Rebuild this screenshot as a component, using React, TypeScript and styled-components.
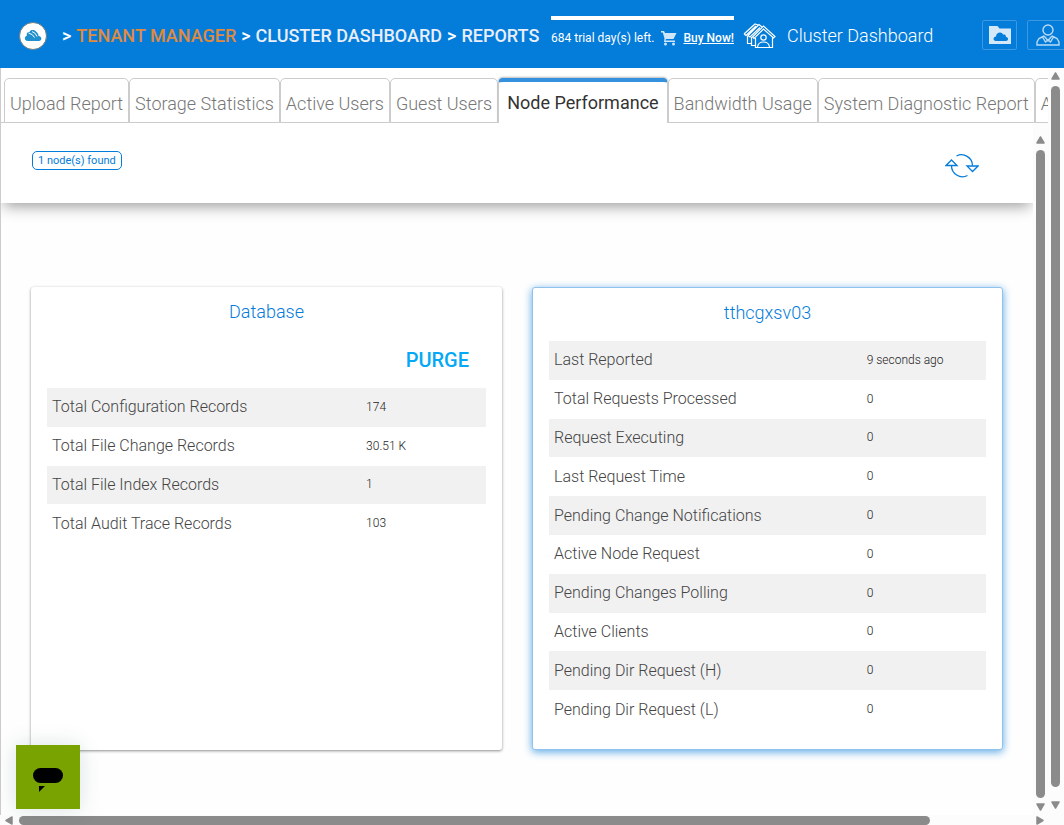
import React from "react";
import styled, { createGlobalStyle, css } from "styled-components";

const Global = createGlobalStyle`
  *, *::before, *::after { box-sizing: border-box; }
  html, body { margin: 0; padding: 0; }
  body { font-family: Roboto, "Liberation Sans", sans-serif; font-weight: 300; color: #222; background: #fff; overflow: hidden; }
  button { font: inherit; cursor: pointer; }
`;

const Page = styled.div`
  display: flex;
  flex-direction: column;
  height: 100vh;
  background: #fdfdfd;
`;

const Header = styled.header`
  display: flex;
  align-items: center;
  flex: none;
  height: 68px;
  padding: 4px 0 0 19px;
  background: #047cda;
  color: #fff;
  overflow: hidden;
  white-space: nowrap;
`;

const Logo = styled.a`
  display: flex;
  flex: none;
  width: 28px;
  height: 28px;
  margin-right: 15px;
`;

const Crumbs = styled.nav`
  display: flex;
  flex: none;
  gap: 5px;
  width: 489px;
  font-size: 18px;
  line-height: 24px;
  font-weight: 500;
`;

const Crumb = styled.a<{ $accent?: boolean }>`
  color: ${(p) => (p.$accent ? "#e08a3e" : "#e9eef8")};
  text-decoration: none;
`;

const Trial = styled.div`
  display: flex;
  align-items: center;
  justify-content: space-between;
  flex: none;
  width: 183px;
  height: 40px;
  border-top: 4px solid #fff;
  font-size: 12px;
  font-weight: 400;
`;

const BuyLink = styled.a`
  color: #fff;
  font-weight: 500;
`;

const Title = styled.h1`
  display: flex;
  align-items: center;
  flex: 1 0 auto;
  gap: 11px;
  margin: 0 0 0 9px;
  font-size: 18px;
  line-height: 26px;
  font-weight: 300;
`;

const HeaderButton = styled.button<{ $wide?: boolean }>`
  display: flex;
  align-items: center;
  justify-content: center;
  flex: none;
  width: ${(p) => (p.$wide ? 42 : 35)}px;
  height: 30px;
  margin: 0 ${(p) => (p.$wide ? -5 : 10)}px 2px 0;
  padding: 0;
  border: 1px solid #3d98e2;
  border-radius: 2px;
  background: none;
`;

const Row = styled.div`
  display: flex;
  flex: 1;
  min-width: 0;
  min-height: 0;
`;

const Frame = styled.div`
  display: flex;
  flex-direction: column;
  flex: 1;
  min-width: 0;
  min-height: 0;
  border-left: 1px solid #ccc;
  background: #fff;
`;

const Tabs = styled.div`
  display: flex;
  align-items: flex-end;
  flex: none;
  height: 55px;
  padding-left: 3px;
  overflow: hidden;
  box-shadow: inset 0 -1px #ccc;
`;

const Tab = styled.button<{ $active?: boolean }>`
  flex: none;
  height: 45px;
  padding: 6px 5px 0;
  border: 1px solid #ccc;
  border-radius: 5px 5px 0 0;
  background: #fff;
  color: #777;
  font-size: 18px;
  line-height: 24px;
  font-weight: 300;
  white-space: nowrap;
  ${(p) =>
    p.$active &&
    css`
      padding: 0 8px;
      border-top: 4px solid #3391de;
      border-bottom: 0;
      color: #333;
      font-weight: 400;
      box-shadow: 0 -1px 2px #bbb;
    `}
`;

const Content = styled.main`
  flex: 1;
  min-width: 0;
  overflow: hidden;
  background: #fefefe;
`;

const Toolbar = styled.div`
  display: flex;
  justify-content: space-between;
  align-items: flex-start;
  height: 80px;
  padding: 28px 54px 0 31px;
  background: #fff;
  box-shadow: 0 6px 14px -3px rgba(0, 0, 0, 0.4);
`;

const Badge = styled.span`
  height: 19px;
  padding: 0 5px;
  border: 1px solid #047cda;
  border-radius: 5px;
  color: #047cda;
  font-size: 11px;
  line-height: 17px;
  font-weight: 400;
`;

const IconButton = styled.button`
  display: flex;
  padding: 0;
  border: 0;
  background: none;
`;

const Cards = styled.div`
  display: grid;
  grid-template-columns: 1fr 1fr;
  gap: 30px;
  padding: 84px 30px 0;
`;

const Card = styled.section<{ $active?: boolean }>`
  min-height: 463px;
  padding: 12px 16px;
  border-radius: 3px;
  background: #fff;
  box-shadow: 0 1px 3px rgba(0, 0, 0, 0.45);
  ${(p) =>
    p.$active &&
    css`
      border: 1px solid #8fc3ee;
      box-shadow: 0 2px 8px #5aa7e4;
    `}
`;

const CardTitle = styled.h2`
  margin: 0;
  color: #047cda;
  font-size: 18px;
  line-height: 26px;
  font-weight: 300;
  text-align: center;
`;

const Actions = styled.div`
  display: flex;
  justify-content: flex-end;
  padding: 21px 17px 14px;
`;

const Purge = styled.button`
  padding: 0;
  border: 0;
  background: none;
  color: #03a9f4;
  font-size: 20px;
  line-height: 28px;
  font-weight: 500;
`;

const Table = styled.table<{ $height: number; $gap?: boolean }>`
  width: 100%;
  height: ${(p) => p.$height}px;
  margin-top: ${(p) => (p.$gap ? 15 : 0)}px;
  border-collapse: collapse;
  table-layout: fixed;
`;

const Tr = styled.tr`
  &:nth-child(odd) { background: #f1f1f1; }
`;

const Label = styled.th`
  width: 72%;
  padding: 0 5px;
  color: #444;
  font-size: 16px;
  line-height: 20px;
  font-weight: 300;
  text-align: left;
`;

const Value = styled.td`
  padding: 0 3px 1px;
  font-size: 12px;
  line-height: 20px;
`;

const VBar = styled.div<{ $inner?: boolean }>`
  display: flex;
  flex-direction: column;
  align-items: center;
  flex: none;
  width: ${(p) => (p.$inner ? 15 : 16)}px;
  padding: ${(p) => (p.$inner ? "13px 0 3px" : "4px 1px 5px 0")};
  gap: 5px;
  background: #fcfcfc;
`;

const HBar = styled.div`
  display: flex;
  align-items: center;
  flex: none;
  height: 10px;
  padding: 1px 19px 0 5px;
  gap: 5px;
  background: #fcfcfc;
`;

const Thumb = styled.div<{ $short?: boolean }>`
  flex: 1;
  width: 9px;
  margin-bottom: ${(p) => (p.$short ? 9 : 0)}px;
  border-radius: 5px;
  background: #8b8b8b;
`;

const HTrack = styled.div`
  flex: 1;
  height: 9px;
`;

const HThumb = styled.div`
  width: 90%;
  height: 9px;
  border-radius: 5px;
  background: #8b8b8b;
`;

const Chat = styled.button`
  position: fixed;
  left: 16px;
  bottom: 16px;
  width: 64px;
  height: 64px;
  padding: 0;
  border: 0;
  background: #78a300;
  box-shadow: 0 0 20px rgba(23, 73, 77, 0.15);
`;

const ArrowIcon = styled.svg`
  flex: none;
`;

const arrows = {
  up: "M4.500 1L8 7H1Z",
  down: "M4.500 7L8 1H1Z",
  left: "M1 4.500L7 1V8Z",
  right: "M7 4.500L1 1V8Z",
};

const Arrow = ({ dir }: { dir: keyof typeof arrows }) => (
  <ArrowIcon width="9" height="9" viewBox="0 0 9 9" aria-hidden="true">
    <path d={arrows[dir]} fill="#8b8b8b" stroke="#8b8b8b" strokeWidth="1.500" strokeLinejoin="round" />
  </ArrowIcon>
);

const ScrollBar = ({ inner }: { inner?: boolean }) => (
  <VBar $inner={inner}>
    <Arrow dir="up" />
    <Thumb $short={!inner} />
    <Arrow dir="down" />
  </VBar>
);

const tabs = ["Upload Report", "Storage Statistics", "Active Users", "Guest Users", "Node Performance", "Bandwidth Usage", "System Diagnostic Report", "A"];

const database = [
  ["Total Configuration Records", "174"],
  ["Total File Change Records", "30.51 K"],
  ["Total File Index Records", "1"],
  ["Total Audit Trace Records", "103"],
];

const node = [
  ["Last Reported", "9 seconds ago"],
  ["Total Requests Processed", "0"],
  ["Request Executing", "0"],
  ["Last Request Time", "0"],
  ["Pending Change Notifications", "0"],
  ["Active Node Request", "0"],
  ["Pending Changes Polling", "0"],
  ["Active Clients", "0"],
  ["Pending Dir Request (H)", "0"],
  ["Pending Dir Request (L)", "0"],
];

const Stats = ({ rows, height, gap }: { rows: string[][]; height: number; gap?: boolean }) => (
  <Table $height={height} $gap={gap}>
    <tbody>
      {rows.map(([name, value]) => (
        <Tr key={name}>
          <Label scope="row">{name}</Label>
          <Value>{value}</Value>
        </Tr>
      ))}
    </tbody>
  </Table>
);

export default function App() {
  return (
    <Page>
      <Global />
      <Header>
        <Logo href="#" aria-label="Home">
          <svg width="28" height="28" viewBox="0 0 28 28">
            <circle cx="14" cy="14" r="13.500" fill="#fff" stroke="#6b7d80" />
            <path d="M9 19C5 19 5 14.500 8 13.500C7 11 9 10 10.500 10C11.500 7.500 15 7.500 17 9.500C19 11 19.500 12.500 19.500 14C23.500 14.500 23 19 20 19Z" fill="#1f8fd0" />
            <path d="M9.500 11Q14 12 15.500 15.500M13 9.500Q17 11 18 14.500" fill="none" stroke="#fff" />
          </svg>
        </Logo>
        <Crumbs aria-label="Breadcrumb">
          <span>&gt;</span>
          <Crumb href="#" $accent>TENANT MANAGER</Crumb>
          <span>&gt;</span>
          <Crumb href="#">CLUSTER DASHBOARD</Crumb>
          <span>&gt;</span>
          <Crumb href="#">REPORTS</Crumb>
        </Crumbs>
        <Trial>
          <span>684 trial day(s) left.</span>
          <svg width="16" height="16" viewBox="0 0 16 16" fill="#cfe5f8" aria-hidden="true">
            <path d="M0 1H3L4 3H15.500L12.500 9H5L4.500 10.500H14V12H3L3.500 8.500L1.800 2.500H0Z" />
            <circle cx="4.500" cy="14" r="1.500" />
            <circle cx="12.500" cy="14" r="1.500" />
          </svg>
          <BuyLink href="#">Buy Now!</BuyLink>
        </Trial>
        <Title>
          <svg width="33" height="26" viewBox="0 0 33 26" fill="none" stroke="#fff" strokeWidth="1.200" aria-hidden="true">
            <path d="M9.500 14L20.500 3L32 13.500L30.500 15L20.500 6L11 15.500ZM12.500 15V24.500H29.500V14.500" />
            <path d="M5 12.500L16 1.500L19 4M5 12.500L7 14L17 4.500M8.500 14V22.500H12.500M1 11L12 1L15 2M1 11L3 12.500L13 3M4.500 12.500V20.500H8.500" />
            <circle cx="20.500" cy="14.500" r="2.700" />
            <path d="M14.500 24C15 20.500 17 19 20.500 19C24 19 26 20.500 26.500 24" />
          </svg>
          Cluster Dashboard
        </Title>
        <HeaderButton aria-label="Cloud folder">
          <svg width="22" height="18" viewBox="0 0 22 18" aria-hidden="true">
            <path d="M0 0H8.500L10.500 2.500H22V18H0Z" fill="#d4e8f9" />
            <path d="M7 15C3.500 15 4 10.500 7 10.500C7 6 13 5 14 8.500C17 8 17 10.500 17 11C20 11 19.500 15 17 15Z" fill="#047cda" />
          </svg>
        </HeaderButton>
        <HeaderButton aria-label="Account" $wide>
          <svg width="24" height="22" viewBox="0 0 24 22" fill="none" stroke="#b9daf6" strokeWidth="1.400" aria-hidden="true">
            <circle cx="12" cy="6" r="5" />
            <path d="M8 12L3 14.500L1 18V21H23V18L21 14.500L16 12M8 12L12 16.500L16 12M6.500 13L9.500 18L12 16L14.500 18L17.500 13" />
          </svg>
        </HeaderButton>
      </Header>
      <Row>
        <Frame>
          <Tabs role="tablist">
            {tabs.map((name) => (
              <Tab key={name} role="tab" aria-selected={name === "Node Performance"} $active={name === "Node Performance"}>
                {name}
              </Tab>
            ))}
          </Tabs>
          <Row>
            <Content>
              <Toolbar>
                <Badge>1 node(s) found</Badge>
                <IconButton aria-label="Refresh">
                  <svg width="34" height="28" viewBox="0 0 34 28" fill="none" stroke="#047cda" strokeWidth="1.300">
                    <path d="M11.500 5A11 11 0 0 1 27.500 14.500M22.500 24.500A11 11 0 0 1 6.500 14.500" />
                    <path d="M1 14.500H12L6.500 9ZM22 15H33L27.500 20.500Z" />
                  </svg>
                </IconButton>
              </Toolbar>
              <Cards>
                <Card>
                  <CardTitle>Database</CardTitle>
                  <Actions>
                    <Purge>PURGE</Purge>
                  </Actions>
                  <Stats rows={database} height={155} />
                </Card>
                <Card $active>
                  <CardTitle>tthcgxsv03</CardTitle>
                  <Stats rows={node} height={388} gap />
                </Card>
              </Cards>
            </Content>
            <ScrollBar inner />
          </Row>
        </Frame>
        <ScrollBar />
      </Row>
      <HBar>
        <Arrow dir="left" />
        <HTrack>
          <HThumb />
        </HTrack>
        <Arrow dir="right" />
      </HBar>
      <Chat aria-label="Open chat">
        <svg width="64" height="64" viewBox="0 0 64 64">
          <rect x="17" y="23" width="30" height="15" rx="7.500" />
          <path d="M23 41H29L23 47Z" />
        </svg>
      </Chat>
    </Page>
  );
}
